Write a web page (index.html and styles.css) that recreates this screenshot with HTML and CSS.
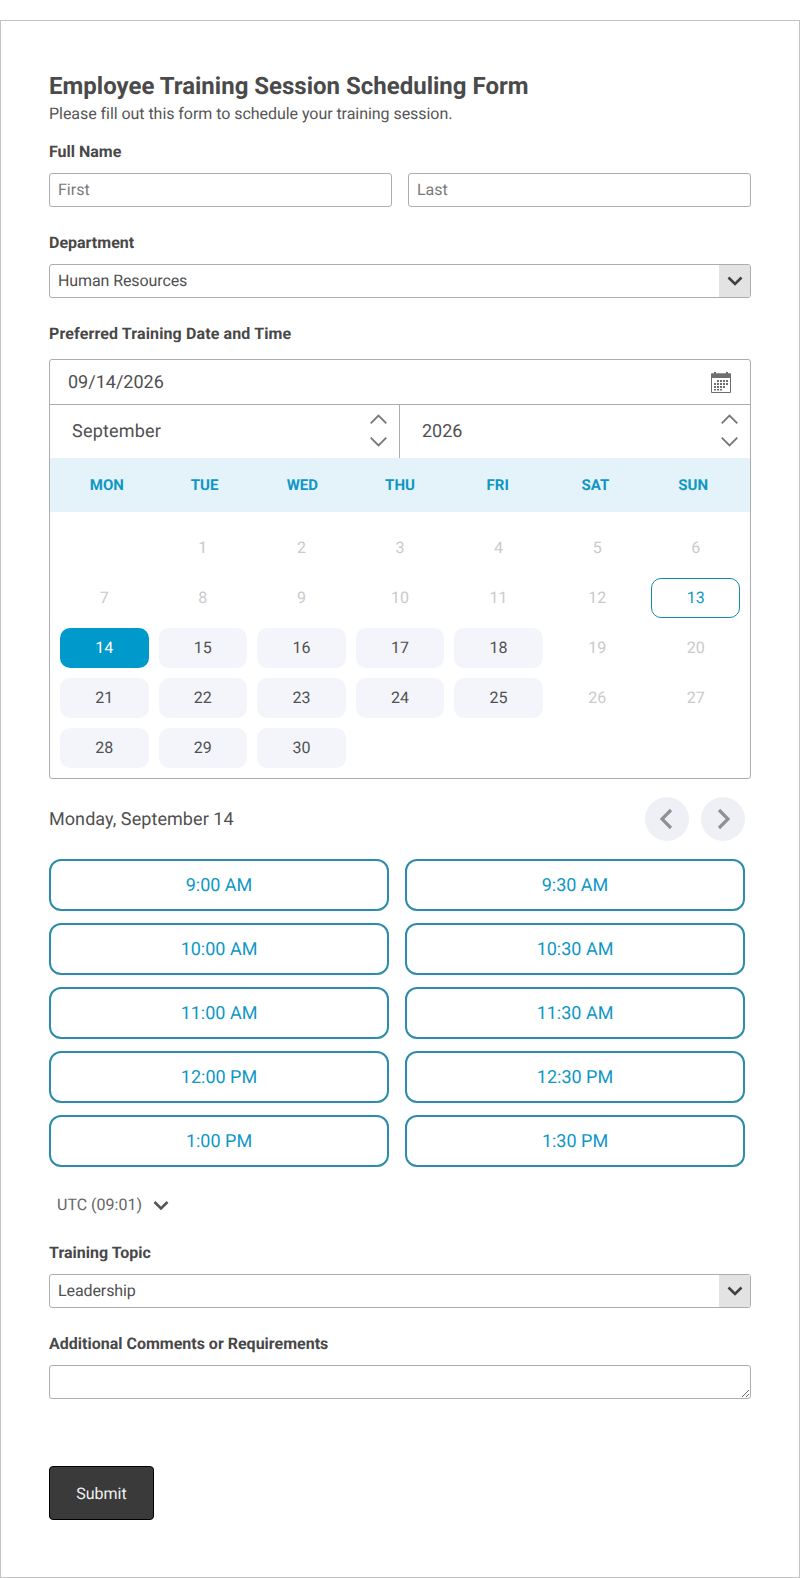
FILE: index.html
```html
<!DOCTYPE html>
<html lang="en">
  <head>
    <meta charset="UTF-8" />
    <meta name="viewport" content="width=device-width, initial-scale=1.0" />
    <title>Employee Training Session Scheduling Form</title>
    <link rel="stylesheet" href="styles.css">
  </head>
  <body>
    <form class="card">
      <h1>Employee Training Session Scheduling Form</h1>
      <p class="subtitle">Please fill out this form to schedule your training session.</p>

      <div class="field">
        <label>Full Name</label>
        <div class="name-row">
          <input type="text" placeholder="First" />
          <input type="text" placeholder="Last" />
        </div>
      </div>

      <div class="field">
        <label for="department">Department</label>
        <div class="select-wrap">
          <select id="department">
            <option>Human Resources</option>
          </select>
          <span class="select-arrow">
            <svg width="16" height="10" viewBox="0 0 16 10"><path d="M1.500 1.500 8 8l6.500-6.500" fill="none" stroke="#404040" stroke-width="2.600"/></svg>
          </span>
        </div>
      </div>

      <div class="field">
        <label class="label-wide">Preferred Training Date and Time</label>
        <div class="calendar">
          <div class="date-row">
            <span>09/14/2026</span>
            <svg width="20" height="21" viewBox="0 0 20 21">
              <path d="M0.500 2h19v18.500h-19z" fill="#fff" stroke="#6e6e6e"/>
              <path d="M0 1.500h3V0h2v1.500h10V0h2v1.500h3V6H0z" fill="#6e6e6e"/>
              <path d="M6 8h2v2H6zM9 8h2v2H9zM12 8h2v2h-2zM15 8h2v2h-2zM3 11h2v2H3zM6 11h2v2H6zM9 11h2v2H9zM12 11h2v2h-2zM15 11h2v2h-2zM3 14h2v2H3zM6 14h2v2H6zM9 14h2v2H9zM12 14h2v2h-2zM3 17h2v1.500H3zM6 17h2v1.500H6zM9 17h2v1.500H9z" fill="#6e6e6e"/>
            </svg>
          </div>
          <div class="month-row">
            <div class="spinner spinner-month">
              <span>September</span>
              <div class="arrows">
                <svg width="17" height="10" viewBox="0 0 17 10"><path d="M.7 9.300 8.500 1.500l7.800 7.800" fill="none" stroke="#777" stroke-width="1.800"/></svg>
                <svg width="17" height="10" viewBox="0 0 17 10"><path d="M.7.700l7.800 7.800L16.300.700" fill="none" stroke="#777" stroke-width="1.800"/></svg>
              </div>
            </div>
            <div class="spinner spinner-year">
              <span>2026</span>
              <div class="arrows">
                <svg width="17" height="10" viewBox="0 0 17 10"><path d="M.7 9.300 8.500 1.500l7.800 7.800" fill="none" stroke="#777" stroke-width="1.800"/></svg>
                <svg width="17" height="10" viewBox="0 0 17 10"><path d="M.7.700l7.800 7.800L16.300.700" fill="none" stroke="#777" stroke-width="1.800"/></svg>
              </div>
            </div>
          </div>
          <div class="weekdays">
            <span>MON</span><span>TUE</span><span>WED</span><span>THU</span><span>FRI</span><span>SAT</span><span>SUN</span>
          </div>
          <div class="days">
            <span class="day"></span>
            <span class="day off">1</span>
            <span class="day off">2</span>
            <span class="day off">3</span>
            <span class="day off">4</span>
            <span class="day off">5</span>
            <span class="day off">6</span>
            <span class="day off">7</span>
            <span class="day off">8</span>
            <span class="day off">9</span>
            <span class="day off">10</span>
            <span class="day off">11</span>
            <span class="day off">12</span>
            <span class="day today">13</span>
            <span class="day selected">14</span>
            <span class="day open">15</span>
            <span class="day open">16</span>
            <span class="day open">17</span>
            <span class="day open">18</span>
            <span class="day off">19</span>
            <span class="day off">20</span>
            <span class="day open">21</span>
            <span class="day open">22</span>
            <span class="day open">23</span>
            <span class="day open">24</span>
            <span class="day open">25</span>
            <span class="day off">26</span>
            <span class="day off">27</span>
            <span class="day open">28</span>
            <span class="day open">29</span>
            <span class="day open">30</span>
          </div>
        </div>

        <div class="date-nav">
          <span class="date-title">Monday, September 14</span>
          <div class="nav-buttons">
            <button type="button" class="nav-btn">
              <svg width="14" height="22" viewBox="0 0 14 22"><path d="M11 2 2 11l9 9" fill="none" stroke="#8f9196" stroke-width="3.200"/></svg>
            </button>
            <button type="button" class="nav-btn">
              <svg width="14" height="22" viewBox="0 0 14 22"><path d="m3 2 9 9-9 9" fill="none" stroke="#8f9196" stroke-width="3.200"/></svg>
            </button>
          </div>
        </div>

        <div class="slots">
          <button type="button" class="slot">9:00 AM</button>
          <button type="button" class="slot">9:30 AM</button>
          <button type="button" class="slot">10:00 AM</button>
          <button type="button" class="slot">10:30 AM</button>
          <button type="button" class="slot">11:00 AM</button>
          <button type="button" class="slot">11:30 AM</button>
          <button type="button" class="slot">12:00 PM</button>
          <button type="button" class="slot">12:30 PM</button>
          <button type="button" class="slot">1:00 PM</button>
          <button type="button" class="slot">1:30 PM</button>
        </div>

        <div class="timezone">
          <span>UTC (09:01)</span>
          <svg width="16" height="11" viewBox="0 0 16 11"><path d="M1.500 2 8 8.500 14.500 2" fill="none" stroke="#555" stroke-width="2.600"/></svg>
        </div>
      </div>

      <div class="field field-topic">
        <label for="topic">Training Topic</label>
        <div class="select-wrap">
          <select id="topic">
            <option>Leadership</option>
          </select>
          <span class="select-arrow">
            <svg width="16" height="10" viewBox="0 0 16 10"><path d="M1.500 1.500 8 8l6.500-6.500" fill="none" stroke="#404040" stroke-width="2.600"/></svg>
          </span>
        </div>
      </div>

      <div class="field">
        <label for="comments">Additional Comments or Requirements</label>
        <textarea id="comments"></textarea>
      </div>

      <button type="submit" class="submit">Submit</button>
    </form>
  </body>
</html>
```

FILE: styles.css
```css
* {
  box-sizing: border-box;
}

body {
  margin: 0;
  background-color: #fff;
  font-family: 'Roboto', sans-serif;
  color: #505050;
  text-rendering: geometricPrecision;
}

.card {
  width: 800px;
  height: 1558px;
  margin-top: 20px;
  border: 1px solid #c3c3c3;
  padding: 51px 48px 0;
}

h1 {
  margin: 0;
  font-size: 24px;
  line-height: 28px;
  font-weight: 700;
  color: #4a4a4a;
}

.subtitle {
  margin: 0 0 15px;
  padding-top: 1px;
  font-size: 16px;
  line-height: 25px;
  letter-spacing: -0.05px;
  color: #555;
}

.field {
  margin-bottom: 25px;
}

.field label {
  display: block;
  padding-top: 1px;
  margin-bottom: 11px;
  font-size: 16px;
  line-height: 20px;
  font-weight: 700;
  color: #484848;
}

.field .label-wide {
  letter-spacing: 0.12px;
}

.name-row {
  display: flex;
  gap: 16px;
}

input,
select,
textarea {
  display: block;
  width: 100%;
  height: 34px;
  border: 1px solid #adadad;
  border-radius: 3px;
  padding: 0 8px 2px;
  background-color: #fff;
  font-family: 'Roboto', sans-serif;
  font-size: 16px;
  color: #505050;
  outline: transparent;
  text-rendering: geometricPrecision;
}

input::placeholder {
  color: #7a7a7a;
}

select {
  appearance: none;
  letter-spacing: -0.1px;
}

.select-wrap {
  position: relative;
}

.select-arrow {
  position: absolute;
  top: 1px;
  right: 1px;
  bottom: 1px;
  width: 31px;
  display: flex;
  align-items: center;
  justify-content: center;
  background-color: #e3e3e3;
  border-radius: 0 2px 2px 0;
}

.calendar {
  margin-top: 15px;
  border: 1px solid #adadad;
  border-radius: 3px;
}

.date-row {
  display: flex;
  align-items: center;
  justify-content: space-between;
  height: 45px;
  padding: 0 19px 0 18px;
  border-bottom: 1px solid #adadad;
  font-size: 18px;
}

.month-row {
  display: flex;
  height: 53px;
}

.spinner {
  flex: 1;
  display: flex;
  align-items: center;
  justify-content: space-between;
  font-size: 18px;
  padding: 0 12px 0 22px;
}

.spinner-month {
  flex: 0 0 350px;
  letter-spacing: 0.2px;
  border-right: 1px solid #adadad;
}

.arrows {
  display: flex;
  flex-direction: column;
  gap: 13px;
  margin-bottom: 2px;
}

.arrows svg {
  display: block;
}

.weekdays {
  display: grid;
  grid-template-columns: repeat(7, 1fr);
  align-items: center;
  height: 54px;
  padding: 0 8px;
  background-color: #e3f3f9;
  font-size: 15px;
  font-weight: 700;
  text-align: center;
  color: #0f97c4;
}

.days {
  display: grid;
  grid-template-columns: repeat(7, 1fr);
  grid-auto-rows: 40px;
  gap: 10px;
  padding: 16px 10px 10px;
}

.day {
  display: flex;
  align-items: center;
  justify-content: center;
  padding-bottom: 1px;
  border-radius: 10px;
  font-size: 16px;
  color: #505050;
}

.day.off {
  color: #c9cacc;
}

.day.open {
  background-color: #f4f5fa;
}

.day.selected {
  background-color: #0099cc;
  color: #fff;
}

.day.today {
  border: 1px solid #1089ab;
  color: #0f97c4;
}

.date-nav {
  display: flex;
  align-items: center;
  justify-content: space-between;
  margin-top: 18px;
  padding-right: 6px;
}

.date-title {
  font-size: 18px;
  letter-spacing: 0.07px;
}

.nav-buttons {
  display: flex;
  gap: 12px;
}

.nav-btn {
  display: flex;
  align-items: center;
  justify-content: center;
  width: 44px;
  height: 44px;
  padding: 0;
  border: none;
  border-radius: 50%;
  background-color: #eef0f6;
}

.slots {
  display: grid;
  grid-template-columns: 1fr 1fr;
  grid-auto-rows: 52px;
  gap: 12px 16px;
  margin-top: 18px;
  padding-right: 6px;
}

.slot {
  border: 2px solid #2a8dab;
  border-radius: 12px;
  background-color: #fff;
  font-family: 'Roboto', sans-serif;
  font-size: 18px;
  color: #0f97c4;
  text-rendering: geometricPrecision;
}

.timezone {
  display: flex;
  align-items: center;
  gap: 11px;
  margin-top: 28px;
  padding-left: 8px;
  font-size: 16px;
  line-height: 20px;
  color: #666;
}

.field-topic {
  padding-top: 2px;
}

textarea {
  resize: both;
}

.submit {
  display: block;
  width: 105px;
  height: 54px;
  margin-top: 67px;
  border: 1px solid #000;
  border-radius: 4px;
  background-color: #3a3a3a;
  font-family: 'Roboto', sans-serif;
  font-size: 16px;
  color: #f0f0f0;
  text-rendering: geometricPrecision;
}
```
